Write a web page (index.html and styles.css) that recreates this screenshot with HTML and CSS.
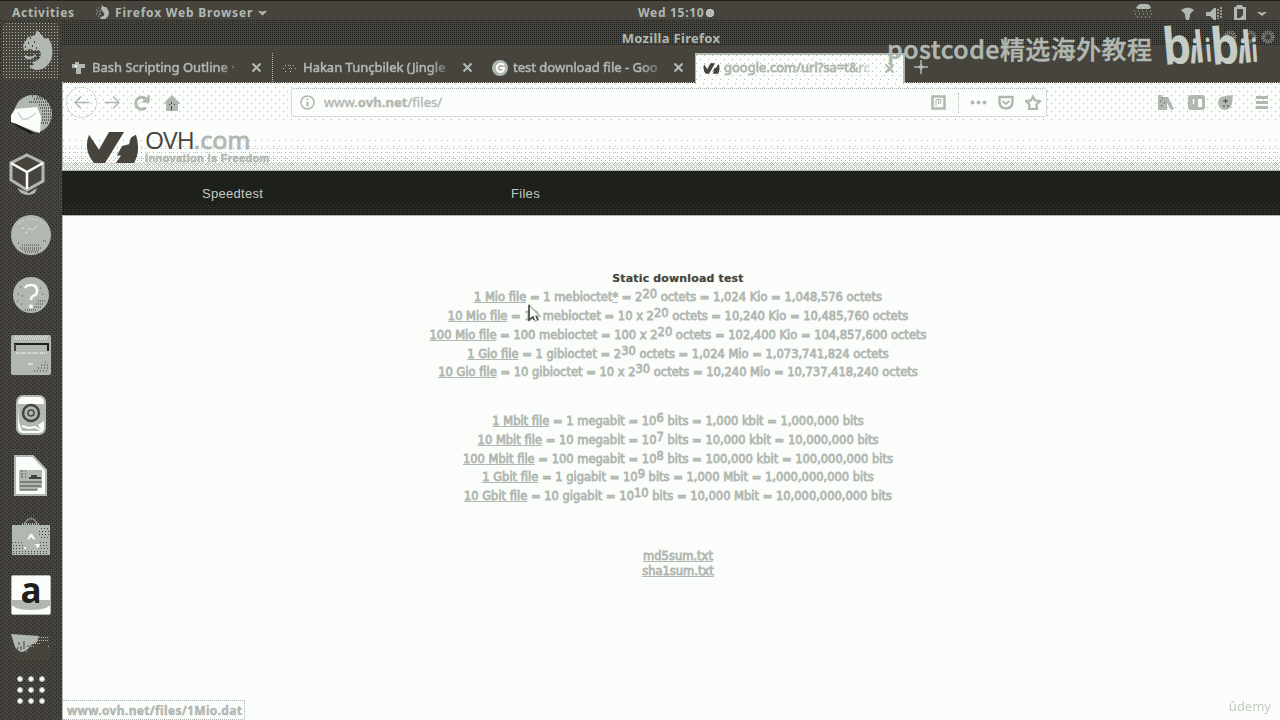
FILE: index.html
```html
<!DOCTYPE html>
<html lang="en">
<head>
<meta charset="utf-8">
<title>Mozilla Firefox</title>
<link rel="stylesheet" href="styles.css">
</head>
<body>
<div class="desktop">
  <header class="topbar">
    <div class="topbar-left">
      <span class="activities">Activities</span>
      <svg class="fox-mini" width="15" height="15" viewBox="0 0 15 15"><path d="M7 0l2 2 2 0c4 4 4 9-1 12H6l-1-2c5 0 5-4 3-5L6 4z" fill="#b1b8b1"/><path d="M1 5h1M3 3h1M2 7h1M4 6h2M1 9h1M4 9h2M3 11h1" stroke="#b1b8b1"/></svg>
      <span class="appname">Firefox Web Browser</span>
      <svg width="9" height="6" viewBox="0 0 9 6"><path d="M0 1h3l1 1 2-1h3L4.500 5.500z" fill="#b1b8b1"/></svg>
    </div>
    <div class="clock">Wed 15:10<i class="clock-dot"></i></div>
    <svg class="tray" width="140" height="20" viewBox="0 0 140 20" fill="#b1b8b1"><path d="M16 7q2-4 5-4h5q4 0 5 4l-2 1H18z"/><path d="M14 10h1M18 10h1M22 10h1M26 10h1M30 10h1M15 13h1M19 13h1M23 13h1M27 13h1M31 13h1M17 16h1M21 16h1M25 16h1M29 16h1" stroke="#b1b8b1"/><path d="M61 9q7-5 13 0l-4 4v2l-1 4h-3l-1-4v-2z"/><path d="M86 11h4l4-4h2v12h-2l-4-4h-4z"/><path d="M98 8v10M101 6v12" stroke="#b1b8b1" stroke-width="1.500" stroke-dasharray="2 1"/><path fill-rule="evenodd" d="M114 6h2l1-2h5l1 2h3v13h-3l-1 1h-8zM117 8v9h3l3-3V8z"/><path d="M137 11h3l2 1 2-1h3l-5 4z"/></svg>
  </header>
  <div class="workspace">
    <nav class="dock">
      <div class="slot slot-first"><div class="active-app"><svg width="56" height="56" viewBox="0 0 56 56"><path d="M34 7l8 9 3-1c8 11 5 27-6 31-5 2-10 1-13-3l5-1-2-3c8-1 11-7 7-13l-6-8 2-6z" fill="#b1b8b1"/><path d="M20 22l5-8 10-2 4 14-7 2-5-2-6 2z" fill="#b1b8b1"/><path d="M22 32q7 4 10-1l1 2q-5 5-11 2z" fill="#b1b8b1"/><path d="M22 17h1M27 15h1M25 20h1M31 19h1M29 23h1M33 25h1M22 24h1M28 28h1M32 28h1" stroke="#46443d" stroke-width="2"/></svg></div></div>
      <div class="slot"><svg width="44" height="44" viewBox="0 0 44 44"><circle cx="24" cy="21" r="19" fill="#b1b8b1"/><path d="M23 3h2M25 6h14M20 9h20M30 12h12M31 15h13M33 18h10M33 21h10M33 24h10M33 27h9M32 30h8M28 4h8" stroke="#46443d" stroke-width="1.500" stroke-dasharray="1 1"/><path d="M2 22l4-6 22-2 4 10-1 16L2 29z" fill="#fbfdfb"/><path d="M9 19l4 7h6l8-6" fill="none" stroke="#b1b8b1"/><path d="M5 30l22 10-6 1-13-7z" fill="#1d201b"/></svg></div>
      <div class="slot"><svg class="cube" width="44" height="48" viewBox="0 0 44 48"><path d="M10 37l12 5 8-5-2 5q-7 4-14 0z" fill="#b1b8b1"/><path d="M20 4L36 12V30L20 39 4 29V12z" fill="#46443d" stroke="#b1b8b1" stroke-width="3"/><path d="M4 12l16 9 16-9M20 21v17" fill="none" stroke="#fbfdfb" stroke-width="2.500"/></svg></div>
      <div class="slot"><svg width="42" height="42" viewBox="0 0 42 42"><circle cx="21" cy="21" r="20" fill="#b1b8b1"/><path d="M8 10q12-10 26 0" fill="none" stroke="#fbfdfb" stroke-dasharray="1 2"/><path d="M16 19l4-5 2 2 6-4M12 15l3-2" stroke="#fbfdfb" fill="none" stroke-dasharray="2 2"/><path d="M8 29h1M12 31h18M10 34h22M12 36h18M15 38h13M33 27h4" stroke="#46443d" stroke-width="1.200" stroke-dasharray="1 1"/></svg></div>
      <div class="slot"><svg width="38" height="38" viewBox="0 0 38 38"><circle cx="19" cy="19" r="18" fill="#b1b8b1"/><path d="M5 25h1M9 28h1M26 25h7M24 28h8M22 31h8M8 11h1M6 18h1M10 20h1M28 12h1M30 18h1M13 34h12" stroke="#46443d" stroke-dasharray="1 1"/><path d="M13 12q1-3 6-3 6 0 6 6 0 4-4 5-2 1-2 4" fill="none" stroke="#fbfdfb" stroke-width="2.500"/><circle cx="19" cy="30.500" r="2" fill="#fbfdfb"/></svg></div>
      <div class="slot"><svg width="40" height="41" viewBox="0 0 40 41"><rect width="40" height="40" rx="2" fill="#b1b8b1"/><path d="M4 2h33M3 4h34" stroke="#fbfdfb" stroke-dasharray="1 1"/><path d="M3 9h34v7" fill="none" stroke="#1d201b" stroke-width="2"/><path d="M4 9v7" stroke="#46443d" stroke-width="2"/><path d="M5 18h31" stroke="#fbfdfb" stroke-dasharray="3 1 1 1"/><path d="M17 29h5" stroke="#fbfdfb"/><path d="M34 27h2M30 30h7M27 33h10M23 36h14" stroke="#46443d" stroke-dasharray="1 2"/></svg></div>
      <div class="slot"><svg width="32" height="40" viewBox="0 0 32 40"><rect x="2" y="1" width="28" height="38" rx="6" fill="#fbfdfb" stroke="#b1b8b1" stroke-width="2"/><path d="M3 9h26v17l-6 4 4 6H7l-3-9z" fill="#b1b8b1"/><circle cx="16" cy="18" r="8" fill="none" stroke="#46443d" stroke-width="2.500"/><circle cx="16" cy="18" r="3" fill="none" stroke="#46443d" stroke-width="1.500"/><path d="M7 31l7 2 6-1 7 4" stroke="#fbfdfb" stroke-width="2" fill="none"/></svg></div>
      <div class="slot"><svg width="34" height="41" viewBox="0 0 34 41"><path d="M1 1h18l13 14v25H1z" fill="#fbfdfb" stroke="#b1b8b1" stroke-width="2"/><path d="M5 15h23v20H5z" fill="#b1b8b1"/><path d="M7 16h5M7 19h5M7 22h5" stroke="#46443d" stroke-dasharray="2 2"/><path d="M15 22h12v2H15zM17 20h6v3h-6z" fill="#46443d"/><path d="M6 27h22M6 31h21M6 35h17" stroke="#46443d"/><path d="M24 33h6v4h-6z" fill="#fbfdfb"/></svg></div>
      <div class="slot"><svg width="40" height="42" viewBox="0 0 40 42"><path d="M1 11h38v30H1z" fill="#b1b8b1"/><path d="M14 9q6-9 12 0M11 10h18" fill="none" stroke="#b1b8b1" stroke-width="2" stroke-dasharray="1 1"/><path d="M30 14.500h8M28 17.500h10M28 20.500h10M30 23.500h8M1 28.500h10M29 28.500h9M2 31.500h10M29 31.500h9M2 34.500h11M27 34.500h11M2 37.500h34M2 39.500h36" stroke="#46443d" stroke-dasharray="1 2"/><path d="M16 26l3-6h2l4 6-3-1-2-2-2 2z" fill="#fbfdfb"/><path d="M24 30h5l-2 5zM13 33h2v2h-2z" fill="#fbfdfb"/></svg></div>
      <div class="slot"><div class="amazon"><i></i><span>a</span></div></div>
      <div class="slot slot-short"><svg width="40" height="28" viewBox="0 0 40 28"><path d="M1 3h38v23H4z" fill="#46443d"/><path d="M0 1l28 2-2 6-6 3-3 4-5 3-4-1-4-4z" fill="#b1b8b1"/><path d="M26 4.500h12M24 7.500h14M22 10.500h8M18 13.500h6M37 13.500h2M9 18.500h1M15 18.500h1" stroke="#b1b8b1" stroke-dasharray="1 1"/><path d="M8 9v3M13 8v8M10 13v4M17 12v2M6 15h2" stroke="#46443d"/></svg></div>
      <div class="slot slot-grid"><svg width="30" height="30" viewBox="0 0 30 30" fill="#fbfdfb" stroke="#b1b8b1"><circle cx="4" cy="4" r="2.500"/><circle cx="15" cy="4" r="2.500"/><circle cx="26" cy="4" r="2.500"/><circle cx="4" cy="15" r="2.500"/><circle cx="15" cy="15" r="2.500"/><circle cx="26" cy="15" r="2.500"/><circle cx="4" cy="26" r="2.500"/><circle cx="15" cy="26" r="2.500"/><circle cx="26" cy="26" r="2.500"/></svg></div>
    </nav>
    <main class="browser">
      <div class="titlebar">Mozilla Firefox</div>
      <div class="tabs">
        <div class="tab tab-one"><svg width="14" height="14" viewBox="0 0 14 14"><path d="M0 3h3V1h4v2h6v4H9v6H4V7H0z" fill="#b1b8b1"/><path d="M3 4h2v2H3z" fill="#fbfdfb"/></svg><span class="label">Bash Scripting Outline ·</span><svg class="close" width="9" height="9" viewBox="0 0 9 9"><path d="M.5.5l8 8M8.500.5l-8 8"/></svg></div>
        <div class="tab tab-two"><svg width="14" height="8" viewBox="0 0 14 8"><path d="M0 4.500h2M2 1.500h2M5 1.500h4M10 1.500h2M6 4.500h3M12 4.500h2M2 7.500h2M7 7.500h1" stroke="#b1b8b1" stroke-dasharray="1 1"/></svg><span class="label">Hakan Tunçbilek (Jingle</span><svg class="close" width="9" height="9" viewBox="0 0 9 9"><path d="M.5.5l8 8M8.500.5l-8 8"/></svg></div>
        <div class="tab tab-three"><svg width="16" height="16" viewBox="0 0 16 16"><circle cx="8" cy="8" r="8" fill="#b1b8b1"/><path d="M12 5q-4-3-7 1-1 5 3 6 4 0 4-4H8" fill="none" stroke="#fbfdfb" stroke-width="2"/></svg><span class="label">test download file - Goo</span><svg class="close" width="9" height="9" viewBox="0 0 9 9"><path d="M.5.5l8 8M8.500.5l-8 8"/></svg></div>
        <div class="tab tab-active"><svg width="17" height="11" viewBox="0 0 53 35"><use href="#ovh-mark"/></svg><span class="label">google.com/url?sa=t&amp;rc</span><svg class="close" width="9" height="9" viewBox="0 0 9 9"><path d="M.5.5l8 8M8.500.5l-8 8"/></svg></div>
        <svg class="newtab" width="14" height="14" viewBox="0 0 14 14"><path d="M0 7h14M7 0v14" stroke="#b1b8b1" stroke-width="1.500"/><path d="M4 7l3-3 3 3-3 3z" fill="#b1b8b1"/></svg>
      </div>
      <div class="toolbar">
        <div class="nav-icons">
          <span class="back"><svg width="16" height="13" viewBox="0 0 16 13"><path d="M15.500 6.500H1M7 .5l-6 6 6 6"/></svg></span>
          <svg width="16" height="13" viewBox="0 0 16 13"><path d="M.5 6.500H15M9 .5l6 6-6 6"/></svg>
          <svg class="reload" width="16" height="16" viewBox="0 0 16 16"><path d="M12 12.500A6 6 0 1 1 12 4" stroke-width="3"/><path d="M9 7h6V1z" fill="#b1b8b1"/></svg>
          <svg class="home" width="16" height="16" viewBox="0 0 16 16"><path d="M0 8l8-8 8 8-2 1v7H2V9z" fill="#b1b8b1" stroke="none"/><path d="M7.500 7v2M7.500 11v4M5.500 9v1M10.500 9v1" stroke="#46443d" stroke-width="1"/></svg>
        </div>
        <div class="urlbar">
          <svg width="15" height="15" viewBox="0 0 15 15"><circle cx="7.500" cy="7.500" r="6.500"/><path d="M7.500 3.500v1.500M7.500 6.500v5" stroke-width="2"/></svg>
          <span class="url">www.<b>ovh.net</b>/files/</span>
          <div class="url-actions">
            <svg class="reader" width="15" height="15" viewBox="0 0 15 15"><path d="M1.500 1.500h12v12h-12z" stroke-width="2.500"/><path d="M5 11V4.500h5V8H7M7.500 5v4" stroke-width="1"/></svg>
            <i class="sep"></i>
            <svg width="17" height="5" viewBox="0 0 17 5" class="dots"><circle cx="2.500" cy="2.500" r="2"/><circle cx="8.500" cy="2.500" r="2"/><circle cx="14.500" cy="2.500" r="2"/></svg>
            <svg width="16" height="15" viewBox="0 0 16 15"><path d="M1.500 2h13v5q0 6-6.500 6.500Q1.500 13 1.500 7z" stroke-width="2.500"/><path d="M4.500 6L8 9l3.500-3" stroke-width="2"/></svg>
            <svg width="16" height="15" viewBox="0 0 16 15"><path d="M8 1.500l2 4 5 .5-3.500 3.500.5 4.500H4l.5-4.500L1 6l5-.5z" stroke-width="2.300"/></svg>
          </div>
        </div>
        <div class="right-icons">
          <svg width="17" height="15" viewBox="0 0 17 15"><path d="M0 0h4v2h6l6 12-3 1-4-7v7H0z" fill="#b1b8b1" stroke="none"/><path d="M4 3h1M2 6h1M6 8h1M3 11h1" stroke="#46443d" stroke-width="1"/></svg>
          <svg width="17" height="15" viewBox="0 0 17 15"><rect width="17" height="15" rx="3" fill="#b1b8b1" stroke="none"/><path d="M10 4h4v8h-4z" fill="#fbfdfb" stroke="none"/><path d="M5.500 4v5" stroke="#fbfdfb"/></svg>
          <svg width="16" height="15" viewBox="0 0 16 15"><path d="M3 2l4-1 8-1-1 8q-1 7-7 7T0 8q0-4 3-6z" fill="#b1b8b1" stroke="none"/><path d="M5 6h5M7.500 4v4M5 11h2M9 11h2" stroke="#46443d" stroke-width="1"/></svg>
          <svg class="menu" width="12" height="13" viewBox="0 0 12 13"><path d="M0 1.500h12M0 6.500h12M0 11.500h12" stroke-width="3"/></svg>
        </div>
      </div>
      <div class="site-header">
        <svg width="53" height="33" viewBox="0 0 53 35" preserveAspectRatio="none"><g id="ovh-mark" fill="#46443d"><path d="M3 4l10 16L23 1h15L19 34H8Q-3 20 3 4z"/><path d="M50 4q5 17-2 30H30l5-8h-4l5-10 7-2 2-7z"/></g></svg>
        <div class="brand"><div class="brand-name">OVH<span>.com</span></div><div class="slogan">Innovation is Freedom</div></div>
      </div>
      <div class="site-nav"><a class="nav-speed">Speedtest</a><a>Files</a></div>
      <div class="content">
        <h1>Static download test</h1>
        <div class="row"><a>1 Mio file</a> = 1 mebioctet<a>*</a> = 2<sup>20</sup> octets = 1,024 Kio = 1,048,576 octets</div>
        <div class="row"><a>10 Mio file</a> = 10 mebioctet = 10 x 2<sup>20</sup> octets = 10,240 Kio = 10,485,760 octets</div>
        <div class="row"><a>100 Mio file</a> = 100 mebioctet = 100 x 2<sup>20</sup> octets = 102,400 Kio = 104,857,600 octets</div>
        <div class="row"><a>1 Gio file</a> = 1 gibioctet = 2<sup>30</sup> octets = 1,024 Mio = 1,073,741,824 octets</div>
        <div class="row"><a>10 Gio file</a> = 10 gibioctet = 10 x 2<sup>30</sup> octets = 10,240 Mio = 10,737,418,240 octets</div>
        <div class="bits">
        <div class="row"><a>1 Mbit file</a> = 1 megabit = 10<sup>6</sup> bits = 1,000 kbit = 1,000,000 bits</div>
        <div class="row"><a>10 Mbit file</a> = 10 megabit = 10<sup>7</sup> bits = 10,000 kbit = 10,000,000 bits</div>
        <div class="row"><a>100 Mbit file</a> = 100 megabit = 10<sup>8</sup> bits = 100,000 kbit = 100,000,000 bits</div>
        <div class="row"><a>1 Gbit file</a> = 1 gigabit = 10<sup>9</sup> bits = 1,000 Mbit = 1,000,000,000 bits</div>
        <div class="row"><a>10 Gbit file</a> = 10 gigabit = 10<sup>10</sup> bits = 10,000 Mbit = 10,000,000,000 bits</div>
        </div>
        <div class="sums"><a>md5sum.txt</a><a>sha1sum.txt</a></div>
      </div>
    </main>
  </div>
  <div class="status">www.ovh.net/files/1Mio.dat</div>
  <svg class="pointer" width="14" height="18" viewBox="0 0 14 18"><path d="M1 1l11 11H8l2 4-3 1-2-4-4 3z" fill="#fbfdfb" stroke="#b1b8b1" stroke-width="1.500"/><path d="M1 1v15l4-3 1 3M8 12l2 4" fill="none" stroke="#46443d" stroke-width="1.500"/></svg>
  <div class="caption">postcode精选海外教程</div>
  <svg class="bili" width="124" height="50" viewBox="0 0 124 50"><g class="bili-dots"><circle cx="69" cy="15" r="4.500"/><circle cx="89" cy="15" r="4.500"/><circle cx="107" cy="15" r="4.500"/></g><g class="bili-text"><text transform="translate(3 43) rotate(-5) scale(.88 1)" font-size="51">b</text><text transform="translate(28 41) rotate(5) scale(.8 1)" font-size="33">i</text><text transform="translate(35 41) rotate(-6) scale(.7 1)" font-size="44">l</text><text transform="translate(45 40) rotate(-5) scale(.7 1)" font-size="32">i</text><text transform="translate(51 43) rotate(-5) scale(.88 1)" font-size="51">b</text><text transform="translate(76 41) rotate(5) scale(.8 1)" font-size="33">i</text><text transform="translate(83 41) rotate(-6) scale(.7 1)" font-size="44">l</text><text transform="translate(91 40) rotate(-4) scale(.7 1)" font-size="32">i</text></g></svg>
  <div class="udemy">ûdemy</div>
</div>
</body>
</html>
```
FILE: styles.css
```css
:root {
  --white: #fbfdfb;
  --gray: #b1b8b1;
  --dark: #46443d;
  --black: #1d201b;
}
* { box-sizing: border-box; }
body { margin: 0; background: var(--dark); font-family: "DejaVu Sans", sans-serif; }
svg { display: block; flex: none; }
.desktop { position: relative; width: 1280px; height: 720px; overflow: hidden; display: flex; flex-direction: column; }

.topbar { height: 20px; flex: none; border-top: 1px solid var(--black); display: grid; grid-template-columns: 638px auto 1fr; align-items: start; color: var(--gray); font: bold 12px/19px "Noto Sans", sans-serif; padding-top: 2px; }
.topbar-left { display: flex; align-items: center; padding-left: 12px; }
.activities { width: 83px; letter-spacing: .7px; }
.appname { margin: 0 5px 0 5px; letter-spacing: .8px; }
.clock { display: flex; align-items: center; gap: 2px; letter-spacing: .7px; }
.clock-dot { width: 8px; height: 8px; border-radius: 50%; background: var(--gray); border: 1px dotted var(--white); }
.tray { justify-self: end; margin: -2px 20px 0 0; overflow: visible; }

.workspace { flex: 1; display: flex; min-height: 0; }
.dock {
  width: 62px; flex: none; padding-top: 1px;
  background-color: var(--dark);
  background-image: conic-gradient(at 1px 1px, transparent 75%, var(--black) 0), conic-gradient(at 1px 1px, transparent 75%, var(--black) 0);
  background-size: 4px 4px, 4px 4px; background-position: 0 0, 2px 2px;
}
.slot { height: 60px; display: flex; align-items: center; justify-content: center; }
.slot-first { height: 64px; align-items: flex-start; padding-top: 2px; }
.slot-short { height: 44px; }
.slot-grid { height: 42px; }
.cube { margin-right: 5px; }
.active-app {
  width: 56px; height: 56px; border-radius: 4px; background-color: var(--dark);
  background-image: conic-gradient(at 1px 1px, transparent 75%, var(--gray) 0); background-size: 3px 3px;
}
.amazon { width: 40px; height: 40px; background: linear-gradient(var(--gray), var(--gray)) 0 24px / 100% 6px no-repeat var(--white); border: 1px solid var(--gray); border-radius: 2px; position: relative; text-align: center; color: var(--black); font: bold 35px/36px "Open Sans", sans-serif; }
.amazon i { position: absolute; left: 2px; right: 2px; top: 26px; height: 8px; background: var(--gray); border-radius: 0 0 50% 50%; }
.amazon span { position: absolute; left: 0; right: 0; top: -4px; }

.browser { flex: 1; display: flex; flex-direction: column; min-width: 0; }
.titlebar {
  height: 33px; flex: none; text-align: center; color: var(--gray); font: bold 13px/37px "Noto Sans", sans-serif; letter-spacing: .3px;
  background:
    linear-gradient(var(--dark), var(--dark)) 0 25px / 100% 8px no-repeat,
    conic-gradient(at 1px 1px, transparent 75%, var(--black) 0) 0 0 / 2px 2px,
    var(--dark);
}
.tabs { height: 30px; flex: none; display: flex; align-items: stretch; border-bottom: 1px dotted var(--gray); color: var(--gray); font: 13px "Noto Sans", sans-serif; }
.tab { width: 211px; display: flex; align-items: center; padding-right: 12px; }
.tab .label { flex: 1; white-space: nowrap; overflow: hidden; -webkit-text-stroke: .5px var(--gray); line-height: 22px; padding-bottom: 2px; -webkit-mask-image: linear-gradient(90deg, #000 82%, transparent); mask-image: linear-gradient(90deg, #000 82%, transparent); }
.close path { fill: none; stroke: var(--gray); stroke-width: 2.200; }
.tab-one { padding: 0 11px 0 10px; gap: 6px; border-right: 1px dotted var(--gray); }
.tab-two { padding-left: 10px; gap: 6px; }
.tab-three { padding-left: 8px; gap: 5px; }
.tab-active {
  width: 210px; border: 2px solid var(--gray); border-width: 2px 2px 0 1px; margin-bottom: -1px; padding: 0 9px 2px 7px; gap: 4px;
  background: conic-gradient(at 1px 1px, transparent 75%, var(--gray) 0) 0 0 / 8px 8px, conic-gradient(at 1px 1px, transparent 75%, var(--gray) 0) 4px 4px / 8px 8px, var(--white);
}
.tab-active .label { -webkit-text-stroke: .9px var(--gray); }
.newtab { margin: 7px 0 0 9px; }

.toolbar {
  height: 39px; flex: none; display: flex; align-items: center;
  background-color: var(--white);
  background-image: conic-gradient(at 1px 1px, transparent 75%, var(--gray) 0), conic-gradient(at 1px 1px, transparent 75%, var(--gray) 0);
  background-size: 8px 8px, 8px 8px; background-position: 0 0, 4px 4px;
  border-left: 1px solid var(--gray);
}
.toolbar svg { fill: none; stroke: var(--gray); stroke-width: 1.500; }
.nav-icons { width: 228px; display: flex; align-items: center; padding-left: 3px; }
.back { width: 31px; height: 31px; border: 1px dotted var(--gray); border-radius: 50%; display: flex; align-items: center; justify-content: center; margin-right: 7px; }
.reload { margin-left: 14px; }
.home { margin-left: 14px; }
.urlbar { width: 756px; height: 29px; background: var(--white); border: 1px dotted var(--gray); border-radius: 3px; display: flex; align-items: center; padding: 0 5px 0 8px; }
.url { margin: -2px 0 0 9px; color: var(--gray); font: 13px "Noto Sans", sans-serif; letter-spacing: .05px; -webkit-text-stroke: .4px var(--gray); }
.url-actions { margin-left: auto; display: flex; align-items: center; gap: 11px; }
.url-actions .dots { fill: var(--gray); stroke: none; }
.reader { margin-right: 1px; }
.sep { width: 0; height: 20px; border-left: 1px dotted var(--gray); }
.right-icons { margin-left: auto; display: flex; align-items: center; gap: 13px; padding-right: 12px; }
.right-icons .menu { margin-left: 9px; }

.site-header {
  height: 49px; flex: none; display: flex; align-items: flex-start; padding: 9px 0 0 23px; gap: 6px;
  border-left: 1px solid var(--gray); border-bottom: 1px solid var(--gray);
  background:
    linear-gradient(var(--white) 16px, transparent 16px),
    conic-gradient(at 1px 1px, transparent 75%, var(--gray) 0) 0 0 / 6px 6px,
    linear-gradient(var(--white) 23px, transparent 23px),
    conic-gradient(at 1px 1px, transparent 75%, var(--gray) 0) 2px 2px / 4px 4px,
    linear-gradient(var(--white) 33px, transparent 33px),
    conic-gradient(at 1px 1px, transparent 75%, var(--gray) 0) 0 0 / 4px 4px,
    linear-gradient(var(--white) 41px, transparent 41px),
    conic-gradient(at 1px 1px, transparent 75%, var(--gray) 0) 1px 1px / 2px 2px,
    var(--white);
}
.brand-name { color: var(--dark); font: 24.500px/18px "Open Sans", sans-serif; letter-spacing: -1px; height: 20px; }
.brand-name span { color: var(--gray); -webkit-text-stroke: 1px var(--gray); letter-spacing: .3px; }
.slogan { color: var(--gray); font: bold 11px/14px "Liberation Sans", sans-serif; letter-spacing: .35px; -webkit-text-stroke: .5px var(--gray); white-space: nowrap; }
.site-nav {
  height: 45px; flex: none; display: flex; color: #c4cac4; font: 13px/45px "Liberation Sans", sans-serif; letter-spacing: .3px; padding-left: 140px; border-bottom: 1px solid var(--gray);
  background: linear-gradient(var(--black) 34px, transparent 34px), conic-gradient(at 1px 1px, transparent 75%, var(--dark) 0) 0 0 / 4px 4px, conic-gradient(at 1px 1px, transparent 75%, var(--dark) 0) 2px 2px / 4px 4px, var(--black);
}
.nav-speed { width: 309px; }

.content { flex: 1; background: var(--white); border-left: 1px solid var(--gray); color: var(--gray); text-align: center; padding: 53px 0 0 13px; font-size: 11.500px; -webkit-text-stroke: .8px var(--gray); }
.content a { text-decoration: underline; }
h1 { margin: 0; font: bold 11px/19px "DejaVu Sans", sans-serif; letter-spacing: .15px; color: var(--dark); -webkit-text-stroke: 0; text-shadow: 0 0 1px var(--gray); padding-top: .3px; }
.row { height: 18.750px; line-height: 18.750px; white-space: nowrap; }
sup { font-size: 11.500px; line-height: 0; vertical-align: 3px; }
.bits { padding-top: 30px; }
.sums { display: flex; flex-direction: column; align-items: center; padding-top: 43px; line-height: 15.500px; }

.status { position: absolute; left: 63px; bottom: 0; width: 182px; height: 20px; border: 1px dotted var(--gray); border-left: 0; background: var(--white); color: var(--gray); font: bold 12px/19px "Noto Sans", sans-serif; letter-spacing: .33px; -webkit-text-stroke: .4px var(--gray); padding-left: 4px; white-space: nowrap; }
.pointer { position: absolute; left: 528px; top: 304px; }
.caption { position: absolute; left: 887px; top: 31px; color: var(--gray); font: 500 25px/34px "Noto Sans CJK SC", sans-serif; letter-spacing: .42px; -webkit-text-stroke: .4px var(--gray); white-space: nowrap; }
.bili { position: absolute; left: 1161px; top: 22px; overflow: visible; }
.bili-text { font-family: "Open Sans", sans-serif; font-weight: bold; fill: #c6ccc6; }
.bili-dots { fill: none; stroke: var(--gray); stroke-width: 4; stroke-dasharray: 1 1; opacity: .7; }
.udemy { position: absolute; right: 9px; bottom: 5px; color: var(--gray); font: 13px/18px "Noto Sans", sans-serif; opacity: .75; }
```
